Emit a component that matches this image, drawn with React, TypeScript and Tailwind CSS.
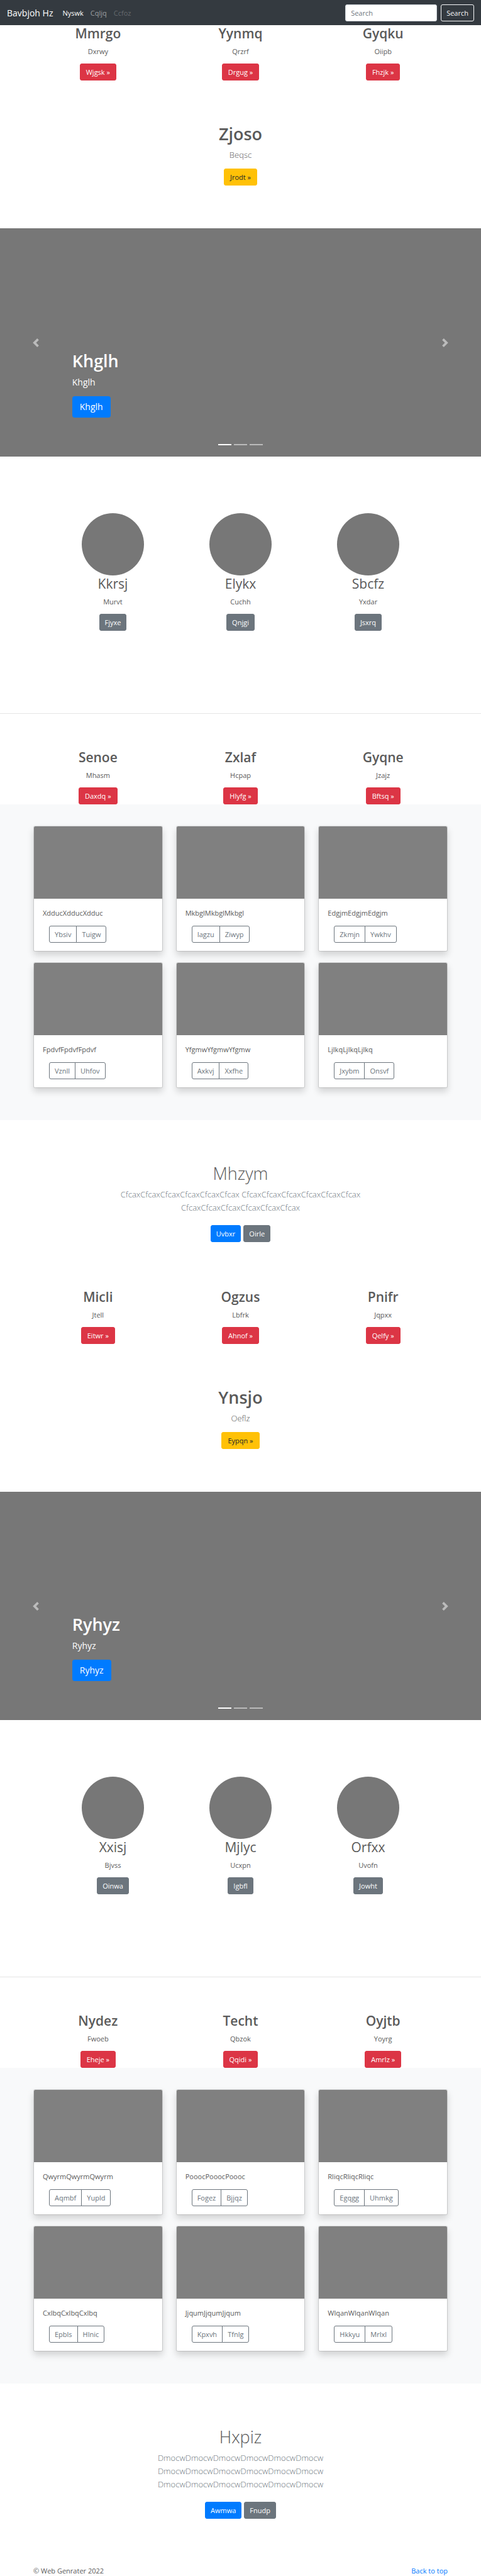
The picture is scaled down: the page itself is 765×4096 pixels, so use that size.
import type { ReactNode } from "react";

type Feature = { title: string; text: string; action: string };
type CardData = { text: string; left: string; right: string };

const btnBase =
  "inline-flex h-[27px] items-center justify-center rounded-[3px] border text-[11px] leading-none whitespace-nowrap";

const tones = {
  danger: "border-[#dc3545] bg-[#dc3545] px-[9px] text-white",
  warning: "border-[#ffc107] bg-[#ffc107] px-[9px] text-[#212529]",
  secondary: "border-[#6c757d] bg-[#6c757d] px-2 text-white",
  primary: "border-[#007bff] bg-[#007bff] px-2 text-white",
};

function LinkButton({ tone, children }: { tone: keyof typeof tones; children: ReactNode }) {
  return (
    <a href="#" className={`${btnBase} ${tones[tone]}`}>
      {children}
    </a>
  );
}

function Navbar() {
  return (
    <nav className="flex h-10 items-center bg-[#343a40] px-[11px]">
      <a href="#" className="mr-[15px] text-[14px] leading-[21px] text-white">
        Bavbjoh Hz
      </a>
      <div className="flex flex-1 gap-[11px] text-[11px] leading-[17px]">
        <a href="#" className="text-white">Nyswk</a>
        <a href="#" className="text-white/50">Cqljq</a>
        <a href="#" className="text-white/25">Ccfoz</a>
      </div>
      <form className="flex gap-[6px]" onSubmit={(e) => e.preventDefault()}>
        <input
          type="text"
          aria-label="Search"
          placeholder="Search"
          className="h-[27px] w-[146px] rounded-[3px] border border-[#ced4da] bg-white px-2 text-[11px] text-[#495057] placeholder:text-[#6c757d]"
        />
        <button type="submit" className={`${btnBase} border-[#f8f9fa] px-2 text-[#f8f9fa]`}>
          Search
        </button>
      </form>
    </nav>
  );
}

function FeatureText({ item, bold }: { item: Feature; bold: boolean }) {
  return (
    <>
      <h2 className={`mb-[6px] text-[21px] leading-[27px] ${bold ? "font-semibold" : "font-normal"}`}>
        {item.title}
      </h2>
      <p className="mb-[11px] text-[11px] leading-[17px]">{item.text}</p>
      <LinkButton tone={bold ? "danger" : "secondary"}>{item.action}</LinkButton>
    </>
  );
}

function FeatureRow({ items }: { items: Feature[] }) {
  return (
    <div className="grid grid-cols-3 gap-[21px] px-[53px]">
      {items.map((item) => (
        <div key={item.title} className="flex flex-col items-center text-center">
          <FeatureText item={item} bold />
        </div>
      ))}
    </div>
  );
}

function Hero({ title, text, action }: Feature) {
  return (
    <section className="flex flex-col items-center py-[68px] text-center">
      <h1 className="mb-[6px] text-[27px] leading-[34px] font-semibold">{title}</h1>
      <p className="mb-[11px] text-[13px] leading-[21px] font-light">{text}</p>
      <LinkButton tone="warning">{action}</LinkButton>
    </section>
  );
}

function Carousel({ label }: { label: string }) {
  return (
    <section className="relative flex h-[363px] flex-col items-start justify-end bg-[#777] px-[15%] pb-[62px] text-white">
      <h1 className="mb-[6px] text-[27px] leading-[34px] font-semibold">{label}</h1>
      <p className="mb-[12px] text-[14px] leading-[21px]">{label}</p>
      <a
        href="#"
        className="inline-flex h-[34px] items-center rounded-[4px] bg-[#007bff] px-3 text-[14px] leading-none"
      >
        {label}
      </a>
      <button
        type="button"
        aria-label="Previous"
        className="absolute inset-y-0 left-0 flex w-[15%] items-center justify-center opacity-50"
      >
        <svg viewBox="0 0 8 8" className="size-[14px] fill-white">
          <path d="M5.25 0l-4 4 4 4 1.5-1.5L4.25 4l2.5-2.5L5.25 0z" />
        </svg>
      </button>
      <button
        type="button"
        aria-label="Next"
        className="absolute inset-y-0 right-0 flex w-[15%] items-center justify-center opacity-50"
      >
        <svg viewBox="0 0 8 8" className="size-[14px] fill-white">
          <path d="M2.75 0l-1.5 1.5L3.75 4l-2.5 2.5L2.75 8l4-4-4-4z" />
        </svg>
      </button>
      <div className="absolute inset-x-0 bottom-[18px] flex justify-center gap-1">
        <span className="h-[2px] w-[21px] bg-white" />
        <span className="h-[2px] w-[21px] bg-white/50" />
        <span className="h-[2px] w-[21px] bg-white/50" />
      </div>
    </section>
  );
}

function Circles({ items }: { items: Feature[] }) {
  return (
    <section className="grid grid-cols-3 border-b border-black/10 px-[78px] pt-[90px] pb-[131px]">
      {items.map((item) => (
        <div key={item.title} className="flex flex-col items-center text-center">
          <div className="size-[99px] rounded-full bg-[#777]" />
          <FeatureText item={item} bold={false} />
        </div>
      ))}
    </section>
  );
}

function Album({ cards }: { cards: CardData[] }) {
  return (
    <section className="grid grid-cols-3 gap-x-[21px] gap-y-[17px] bg-[#f8f9fa] px-[53px] pt-[34px] pb-[51px]">
      {cards.map((card) => (
        <article
          key={card.text}
          className="overflow-hidden rounded-[3px] border border-black/12 bg-white bg-clip-padding shadow-[0_6px_11px_rgba(0,0,0,0.15)]"
        >
          <div className="h-[115px] bg-[#808080]" />
          <div className="px-[14px] pt-[14px] pb-[13px]">
            <p className="mb-[12px] text-[11px] leading-[17px]">{card.text}</p>
            <div className="ml-[10px] flex text-[#6c757d]">
              <button type="button" className={`${btnBase} rounded-r-none border-[#6c757d] px-2`}>
                {card.left}
              </button>
              <button type="button" className={`${btnBase} -ml-px rounded-l-none border-[#6c757d] px-2`}>
                {card.right}
              </button>
            </div>
          </div>
        </article>
      ))}
    </section>
  );
}

function CallToAction({ title, word, primary, secondary }: { title: string; word: string; primary: string; secondary: string }) {
  const chunk = word.repeat(6);
  return (
    <section className="mx-auto flex max-w-[432px] flex-col items-center pt-[68px] pb-[74px] text-center">
      <h1 className="mb-[6px] text-[27px] leading-[34px] font-light">{title}</h1>
      <p className="mb-[17px] text-[13px] leading-[21px] font-light text-[#6c757d]">
        {chunk} {chunk} {chunk}
      </p>
      <div className="flex gap-1">
        <LinkButton tone="primary">{primary}</LinkButton>
        <LinkButton tone="secondary">{secondary}</LinkButton>
      </div>
    </section>
  );
}

export default function App() {
  return (
    <div className="bg-white font-['Open_Sans','Noto_Sans',sans-serif] text-[#5a5a5a]">
      <Navbar />
      <main>
        <FeatureRow
          items={[
            { title: "Mmrgo", text: "Dxrwy", action: "Wjgsk »" },
            { title: "Yynmq", text: "Qrzrf", action: "Drgug »" },
            { title: "Gyqku", text: "Oiipb", action: "Fhzjk »" },
          ]}
        />
        <Hero title="Zjoso" text="Beqsc" action="Jrodt »" />
        <Carousel label="Khglh" />
        <Circles
          items={[
            { title: "Kkrsj", text: "Murvt", action: "Fjyxe" },
            { title: "Elykx", text: "Cuchh", action: "Qnjgi" },
            { title: "Sbcfz", text: "Yxdar", action: "Jsxrq" },
          ]}
        />
        <div className="pt-[56px]">
          <FeatureRow
            items={[
              { title: "Senoe", text: "Mhasm", action: "Daxdq »" },
              { title: "Zxlaf", text: "Hcpap", action: "Hlyfg »" },
              { title: "Gyqne", text: "Jzajz", action: "Bftsq »" },
            ]}
          />
        </div>
        <Album
          cards={[
            { text: "XdducXdducXdduc", left: "Ybsiv", right: "Tuigw" },
            { text: "MkbglMkbglMkbgl", left: "Iagzu", right: "Ziwyp" },
            { text: "EdgjmEdgjmEdgjm", left: "Zkmjn", right: "Ywkhv" },
            { text: "FpdvfFpdvfFpdvf", left: "Vznll", right: "Uhfov" },
            { text: "YfgmwYfgmwYfgmw", left: "Axkvj", right: "Xxfhe" },
            { text: "LjlkqLjlkqLjlkq", left: "Jxybm", right: "Onsvf" },
          ]}
        />
        <CallToAction title="Mhzym" word="Cfcax" primary="Uvbxr" secondary="Oirle" />
        <FeatureRow
          items={[
            { title: "Micli", text: "Jtell", action: "Eitwr »" },
            { title: "Ogzus", text: "Lbfrk", action: "Ahnof »" },
            { title: "Pnifr", text: "Jqpxx", action: "Qelfy »" },
          ]}
        />
        <Hero title="Ynsjo" text="Oeflz" action="Eypqn »" />
        <Carousel label="Ryhyz" />
        <Circles
          items={[
            { title: "Xxisj", text: "Bjvss", action: "Oinwa" },
            { title: "Mjlyc", text: "Ucxpn", action: "Igbfl" },
            { title: "Orfxx", text: "Uvofn", action: "Jowht" },
          ]}
        />
        <div className="pt-[56px]">
          <FeatureRow
            items={[
              { title: "Nydez", text: "Fwoeb", action: "Eheje »" },
              { title: "Techt", text: "Qbzok", action: "Qqidi »" },
              { title: "Oyjtb", text: "Yoyrg", action: "Amrlz »" },
            ]}
          />
        </div>
        <Album
          cards={[
            { text: "QwyrmQwyrmQwyrm", left: "Aqmbf", right: "Yupld" },
            { text: "PooocPooocPoooc", left: "Fogez", right: "Bjjqz" },
            { text: "RliqcRliqcRliqc", left: "Egqgg", right: "Uhmkg" },
            { text: "CxlbqCxlbqCxlbq", left: "Epbls", right: "Hlnic" },
            { text: "JjqumJjqumJjqum", left: "Kpxvh", right: "Tfnlg" },
            { text: "WlqanWlqanWlqan", left: "Hkkyu", right: "Mrlxl" },
          ]}
        />
        <CallToAction title="Hxpiz" word="Dmocw" primary="Awmwa" secondary="Fnudp" />
      </main>
      <footer className="flex justify-between px-[53px] text-[11px] leading-[17px]">
        <p>© Web Genrater 2022</p>
        <a href="#" className="text-[#007bff]">Back to top</a>
      </footer>
    </div>
  );
}
